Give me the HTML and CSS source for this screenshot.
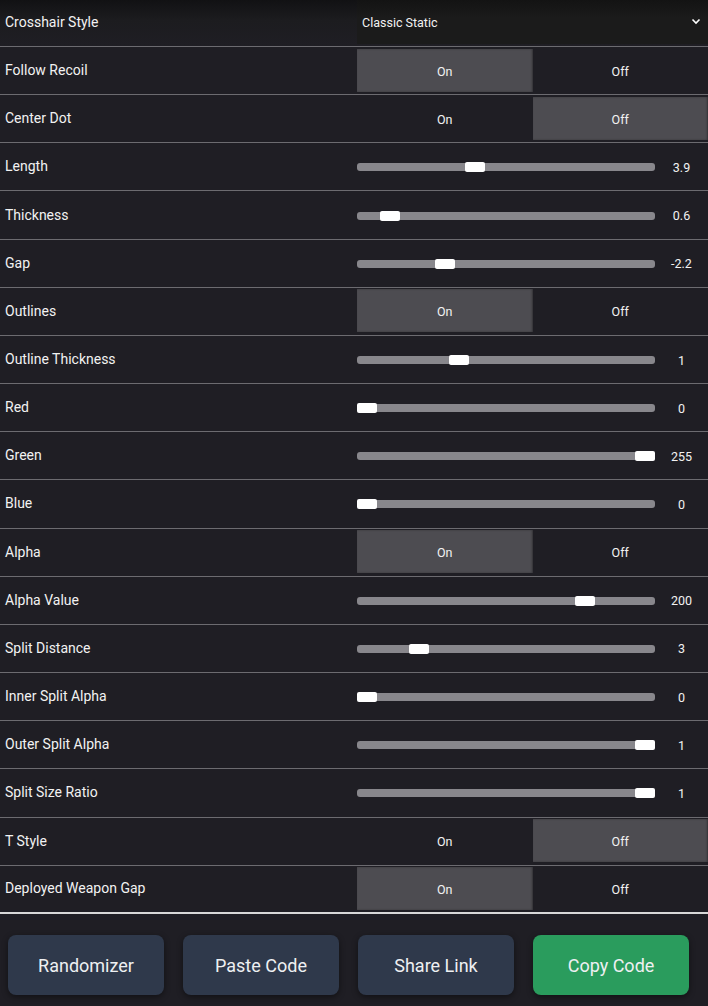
FILE: index.html
```html
<!DOCTYPE html>
<html>
<head>
<meta charset="utf-8">
<link rel="stylesheet" href="styles.css">
</head>
<body>
<div class="page">
  <div class="list">
    <div class="row row-first">
      <div class="label">Crosshair Style</div>
      <div class="select">
        <span>Classic Static</span>
        <svg class="chev" width="10" height="7" viewBox="0 0 10 7"><path d="M1.5 1.5 L5 5 L8.5 1.5" fill="none" stroke="#fff" stroke-width="1.6"/></svg>
      </div>
    </div>
    <div class="row"><div class="label">Follow Recoil</div><div class="toggle"><div class="opt active">On</div><div class="opt">Off</div></div></div>
    <div class="row"><div class="label">Center Dot</div><div class="toggle"><div class="opt">On</div><div class="opt active">Off</div></div></div>
    <div class="row"><div class="label">Length</div><div class="slider"><div class="track"><div class="thumb" style="--p:0.388"></div></div><div class="val">3.9</div></div></div>
    <div class="row"><div class="label">Thickness</div><div class="slider"><div class="track"><div class="thumb" style="--p:0.083"></div></div><div class="val">0.6</div></div></div>
    <div class="row"><div class="label">Gap</div><div class="slider"><div class="track"><div class="thumb" style="--p:0.28"></div></div><div class="val">-2.2</div></div></div>
    <div class="row"><div class="label">Outlines</div><div class="toggle"><div class="opt active">On</div><div class="opt">Off</div></div></div>
    <div class="row"><div class="label">Outline Thickness</div><div class="slider"><div class="track"><div class="thumb" style="--p:0.33"></div></div><div class="val">1</div></div></div>
    <div class="row"><div class="label">Red</div><div class="slider"><div class="track"><div class="thumb" style="--p:0"></div></div><div class="val">0</div></div></div>
    <div class="row"><div class="label">Green</div><div class="slider"><div class="track"><div class="thumb" style="--p:1"></div></div><div class="val">255</div></div></div>
    <div class="row"><div class="label">Blue</div><div class="slider"><div class="track"><div class="thumb" style="--p:0"></div></div><div class="val">0</div></div></div>
    <div class="row"><div class="label">Alpha</div><div class="toggle"><div class="opt active">On</div><div class="opt">Off</div></div></div>
    <div class="row"><div class="label">Alpha Value</div><div class="slider"><div class="track"><div class="thumb" style="--p:0.784"></div></div><div class="val">200</div></div></div>
    <div class="row"><div class="label">Split Distance</div><div class="slider"><div class="track"><div class="thumb" style="--p:0.187"></div></div><div class="val">3</div></div></div>
    <div class="row"><div class="label">Inner Split Alpha</div><div class="slider"><div class="track"><div class="thumb" style="--p:0"></div></div><div class="val">0</div></div></div>
    <div class="row"><div class="label">Outer Split Alpha</div><div class="slider"><div class="track"><div class="thumb" style="--p:1"></div></div><div class="val">1</div></div></div>
    <div class="row"><div class="label">Split Size Ratio</div><div class="slider"><div class="track"><div class="thumb" style="--p:1"></div></div><div class="val">1</div></div></div>
    <div class="row"><div class="label">T Style</div><div class="toggle"><div class="opt">On</div><div class="opt active">Off</div></div></div>
    <div class="row row-last"><div class="label">Deployed Weapon Gap</div><div class="toggle"><div class="opt active">On</div><div class="opt">Off</div></div></div>
  </div>
  <div class="actions">
    <button class="btn">Randomizer</button>
    <button class="btn">Paste Code</button>
    <button class="btn">Share Link</button>
    <button class="btn btn-green">Copy Code</button>
  </div>
</div>
</body>
</html>
```
FILE: styles.css
```css
html, body {
  margin: 0;
  padding: 0;
  background: #1f1e24;
  height: 100%;
  overflow: hidden;
}
.page {
  width: 708px;
  font-family: Roboto, "Liberation Sans", Arial, sans-serif;
  color: #f2f2f2;
}
.list {
  margin-top: -1.17px;
}
.row {
  display: grid;
  grid-template-columns: 357px 351px;
  height: 47.17px;
  border-bottom: 1px solid #6c6b70;
  align-items: center;
}
.row-first {
  background: linear-gradient(to bottom, #111113 0%, #1c1c1f 45%, #1f1e24 100%);
}
.row-last {
  border-bottom: 2px solid #d8d8d8;
  height: 46.17px;
}
.label {
  padding-left: 5px;
  font-size: 14px;
  padding-bottom: 1px;
}
.select {
  height: 44px;
  align-self: start;
  margin-top: 1px;
  background: linear-gradient(to bottom, #131313, #1b1b1b 40%, #1b1b1b);
  display: flex;
  align-items: center;
  justify-content: space-between;
  padding: 0 7px 0 5px;
  font-size: 12.5px;
}
.select span { padding-top: 2px; }
.chev { margin-top: 0; }
.toggle {
  display: grid;
  grid-template-columns: 1fr 1fr;
  height: 43px;
  align-self: start;
  margin-top: 1.5px;
}
.opt {
  display: flex;
  align-items: center;
  justify-content: center;
  font-size: 12.5px;
  padding-top: 2px;
}
.opt.active {
  background: #4d4c51;
  box-shadow: inset -1px 0 2px rgba(0,0,0,0.35);
}
.slider {
  display: grid;
  grid-template-columns: 298px 53px;
  align-items: center;
  padding-top: 1px;
}
.track {
  position: relative;
  height: 8px;
  border-radius: 3px;
  background: #88878c;
}
.thumb {
  position: absolute;
  top: -1px;
  left: calc(var(--p) * (100% - 20px));
  width: 20px;
  height: 10px;
  border-radius: 2px;
  background: #ffffff;
}
.val {
  text-align: center;
  font-size: 12.5px;
  padding-bottom: 0;
}
.actions {
  display: grid;
  grid-template-columns: repeat(4, 156px);
  column-gap: 19px;
  padding: 21px 0 0 8px;
}
.btn {
  height: 60px;
  border: none;
  border-radius: 8px;
  background: #2f394b;
  color: #eef0f2;
  font-family: Roboto, "Liberation Sans", Arial, sans-serif;
  font-size: 18px;
  box-shadow: 0 2px 6px rgba(0,0,0,0.45);
  padding: 2px 0 0 0;
}
.btn-green {
  background: #2a9c5d;
}
```
